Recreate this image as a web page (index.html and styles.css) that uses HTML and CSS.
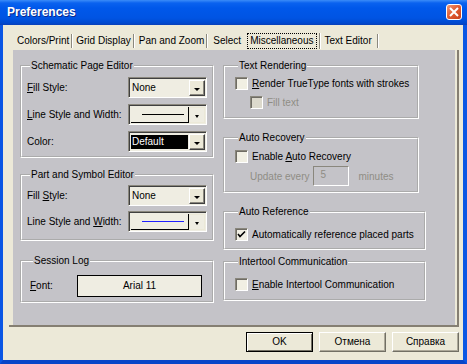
FILE: index.html
```html
<!DOCTYPE html>
<html lang="en">
<head>
    <meta charset="UTF-8">
    <title>Preferences</title>
    <link rel="stylesheet" href="styles.css">
</head>
<body>
    <div class="window">
        <div class="titlebar">
            <span class="title">Preferences</span>
            <span class="close">
                <svg width="10" height="10" viewBox="0 0 10 10"><path d="M1 1 L9 9 M9 1 L1 9" stroke="#fff" stroke-width="2"/></svg>
            </span>
        </div>

        <div class="frame">
            <div class="tabs">
                <span class="tab">Colors/Print</span>
                <span class="tab">Grid Display</span>
                <span class="tab wide">Pan and Zoom</span>
                <span class="tab prev">Select</span>
                <span class="tab active"><span class="focus">Miscellaneous</span></span>
                <span class="tab last">Text Editor</span>
            </div>

            <div class="panel">
                <div class="sheet">
                    <div class="col">
                        <fieldset class="group g-schematic">
                            <legend>Schematic Page Editor</legend>
                            <div class="row">
                                <label><u>F</u>ill Style:</label>
                                <div class="combo"><span class="value">None</span><span class="drop"></span></div>
                            </div>
                            <div class="row">
                                <label><u>L</u>ine Style and Width:</label>
                                <div class="combo line"><span class="value"><i class="stroke"></i></span><span class="drop flat"></span></div>
                            </div>
                            <div class="row">
                                <label>Color:</label>
                                <div class="combo"><span class="value dark">Default</span><span class="drop"></span></div>
                            </div>
                        </fieldset>

                        <fieldset class="group g-part">
                            <legend>Part and Symbol Editor</legend>
                            <div class="row">
                                <label>Fill <u>S</u>tyle:</label>
                                <div class="combo"><span class="value">None</span><span class="drop"></span></div>
                            </div>
                            <div class="row">
                                <label>Line Style and <u>W</u>idth:</label>
                                <div class="combo line"><span class="value"><i class="stroke blue"></i></span><span class="drop flat"></span></div>
                            </div>
                        </fieldset>

                        <fieldset class="group g-log">
                            <legend>Session Log</legend>
                            <div class="row">
                                <label class="font-label"><u>F</u>ont:</label>
                                <span class="font-btn">Arial 11</span>
                            </div>
                        </fieldset>
                    </div>

                    <div class="col">
                        <fieldset class="group g-text narrow">
                            <legend>Text Rendering</legend>
                            <div class="check"><span class="box"></span><span><u>R</u>ender TrueType fonts with strokes</span></div>
                            <div class="check sub disabled"><span class="box"></span><span>Fill text</span></div>
                        </fieldset>

                        <fieldset class="group g-recovery narrow">
                            <legend>Auto Recovery</legend>
                            <div class="check"><span class="box"></span><span>Enable <u>A</u>uto Recovery</span></div>
                            <div class="update disabled">
                                <span>Update every</span>
                                <span class="num">5</span>
                                <span>minutes</span>
                            </div>
                        </fieldset>

                        <fieldset class="group g-ref">
                            <legend>Auto Reference</legend>
                            <div class="check"><span class="box checked">
                                <svg width="9" height="9" viewBox="0 0 9 9"><path d="M1 4 L3 6.5 L8 1.5" fill="none" stroke="#000" stroke-width="1.6"/></svg>
                            </span><span>Automatically reference placed parts</span></div>
                        </fieldset>

                        <fieldset class="group g-inter">
                            <legend>Intertool Communication</legend>
                            <div class="check"><span class="box"></span><span><u>E</u>nable Intertool Communication</span></div>
                        </fieldset>
                    </div>
                </div>
            </div>

            <div class="buttons">
                <span class="btn default">OK</span>
                <span class="btn">Отмена</span>
                <span class="btn">Справка</span>
            </div>
        </div>
    </div>
</body>
</html>
```

FILE: styles.css
```css
* {
    margin: 0;
    padding: 0;
    box-sizing: border-box;
}

body {
    font-family: 'Liberation Sans', Arial, sans-serif;
    font-size: 10px;
    color: #000;
    background: #fff;
}

.window {
    width: 467px;
    height: 364px;
    display: flex;
    flex-direction: column;
}

/* title bar */
.titlebar {
    height: 25px;
    display: flex;
    align-items: center;
    justify-content: space-between;
    padding: 0 5px 1px 7px;
    background: linear-gradient(#3b8cf8 0, #0a62ef 3px, #0058ea 8px, #0054e3 18px, #0049cf 23px, #0a3fb8 25px);
}

.title {
    color: #fff;
    font-weight: bold;
    font-size: 12px;
    text-shadow: 1px 1px 0 #0b2a8c;
}

.close {
    width: 16px;
    height: 16px;
    border: 1px solid #fff;
    border-radius: 3px;
    background: linear-gradient(135deg, #f09a78, #e0592f 50%, #c8401b);
    display: flex;
    align-items: center;
    justify-content: center;
}

.frame {
    flex: 1;
    background: #ece9d8;
    border-left: 3px solid #0a56e4;
    border-right: 4px solid #0a56e4;
    border-bottom: 4px solid #0845c8;
    padding-top: 7px;
}

/* tabs */
.tabs {
    height: 18px;
    display: flex;
    align-items: center;
    padding-left: 10px;
}

.tab {
    padding: 0 2px 0 4px;
    height: 14px;
    line-height: 14px;
    border-right: 1px solid #8c897e;
    box-shadow: 1px 0 0 #fff;
}

.tab.wide { padding-left: 5px; }

.tab.prev {
    border-right: none;
    box-shadow: none;
    padding: 0 6px 0 6px;
}

.tab.active {
    padding: 0 2px 0 0;
    height: 16px;
}

.tab.last { padding: 0 5px 0 5px; }

.focus {
    display: inline-block;
    border: 1px dotted #000;
    padding: 0 2px 0 2px;
    line-height: 14px;
}

/* page */
.panel {
    margin: 0 4px 0 6px;
    padding: 0 2px 0 4px;
    border-right: 2px solid #857f72;
    border-bottom: 2px solid #857f72;
}

.sheet {
    height: 275px;
    background: #c4c3c8;
    padding: 9px 0 0 7px;
    display: grid;
    grid-template-columns: 194px 203px;
    column-gap: 9px;
    align-items: start;
}

.col {
    display: flex;
    flex-direction: column;
}

.group {
    border: 2px groove #fff;
    padding: 4px 4px 4px 5px;
}

.group legend {
    height: 14px;
    line-height: 14px;
    padding: 0 1px;
    margin-left: 3px;
}

.g-part { margin-top: 10px; padding-top: 3px; padding-bottom: 7px; }
.g-log { margin-top: 13px; padding: 7px 8px 5px 8px; }

.row {
    display: flex;
    align-items: center;
    height: 21px;
}

.row + .row { margin-top: 6px; }
.g-part .row + .row { margin-top: 5px; }

.row label {
    width: 101px;
}

/* combo boxes */
.combo {
    width: 79px;
    height: 21px;
    display: flex;
    border: 1px solid;
    border-color: #8a877d #fff #fff #8a877d;
    box-shadow: inset 1px 1px 0 #404040;
    background: #efede2;
    padding: 2px 1px 1px 2px;
}

.value {
    flex: 1;
    line-height: 16px;
    padding-left: 1px;
}

.value.dark {
    background: #000;
    color: #fff;
    margin: 1px 1px 1px 0;
    line-height: 14px;
}

.drop {
    width: 16px;
    border: 1px solid;
    border-color: #fff #404040 #404040 #fff;
    box-shadow: inset -1px -1px 0 #8a877d;
    background: #ece9d8;
    display: flex;
    align-items: center;
    justify-content: center;
}

.drop::after {
    content: '';
    border-top: 3px solid #000;
    border-left: 3px solid transparent;
    border-right: 3px solid transparent;
    margin-top: 2px;
}

.drop.flat {
    border-color: #ece9d8;
    box-shadow: none;
    background: #efede2;
}

.drop.flat::after {
    border-width: 3px 2px 0;
}

.combo.line .value {
    height: 16px;
    border-right: 1px solid #000;
    border-bottom: 1px solid #000;
    padding: 7px 0 0 11px;
}

.stroke {
    display: block;
    width: 42px;
    height: 1px;
    background: #000;
}

.combo .stroke.blue {
    background: #1f1fff;
    height: 1px;
}

.font-label { width: 47px !important; }

.font-btn {
    width: 125px;
    height: 22px;
    line-height: 20px;
    border: 1px solid #000;
    background: #efede2;
    text-align: center;
}

/* right column */
.narrow { width: 196px; }

.g-text { padding: 4px 4px 8px 10px; }
.g-recovery { margin-top: 12px; padding: 5px 4px 5px 10px; }
.g-ref { margin-top: 12px; padding: 9px 4px 7px 10px; }
.g-inter { margin-top: 5px; padding: 9px 4px 8px 10px; }

.check {
    display: flex;
    align-items: center;
    height: 13px;
}

.check.sub {
    margin-top: 6px;
    padding-left: 15px;
}

.box {
    width: 13px;
    height: 13px;
    margin-right: 4px;
    border: 1px solid;
    border-color: #8a877d #fff #fff #8a877d;
    box-shadow: inset 1px 1px 0 #6f6c64;
    background: #f1efe3;
    display: flex;
    align-items: center;
    justify-content: center;
}

.disabled { color: #8f8d85; }
.disabled .box { background: #dcd9cc; }

.update {
    display: flex;
    align-items: center;
    height: 20px;
    margin-top: 3px;
    padding-left: 15px;
}

.num {
    width: 36px;
    height: 20px;
    margin: 0 9px 0 4px;
    border: 1px solid;
    border-color: #8a877d #fff #fff #8a877d;
    background: #c4c3c8;
    padding-left: 6px;
    line-height: 16px;
}

/* bottom buttons */
.buttons {
    display: flex;
    justify-content: flex-end;
    gap: 6px;
    padding-right: 4px;
    margin-top: 5px;
}

.btn {
    width: 67px;
    height: 20px;
    line-height: 18px;
    text-align: center;
    background: #ece9d8;
    border: 1px solid;
    border-color: #fff #716f64 #716f64 #fff;
    box-shadow: inset -1px -1px 0 #aca899;
}

.btn.default {
    border-color: #000;
    box-shadow: inset 1px 1px 0 #fff, inset -1px -1px 0 #716f64;
}
```
